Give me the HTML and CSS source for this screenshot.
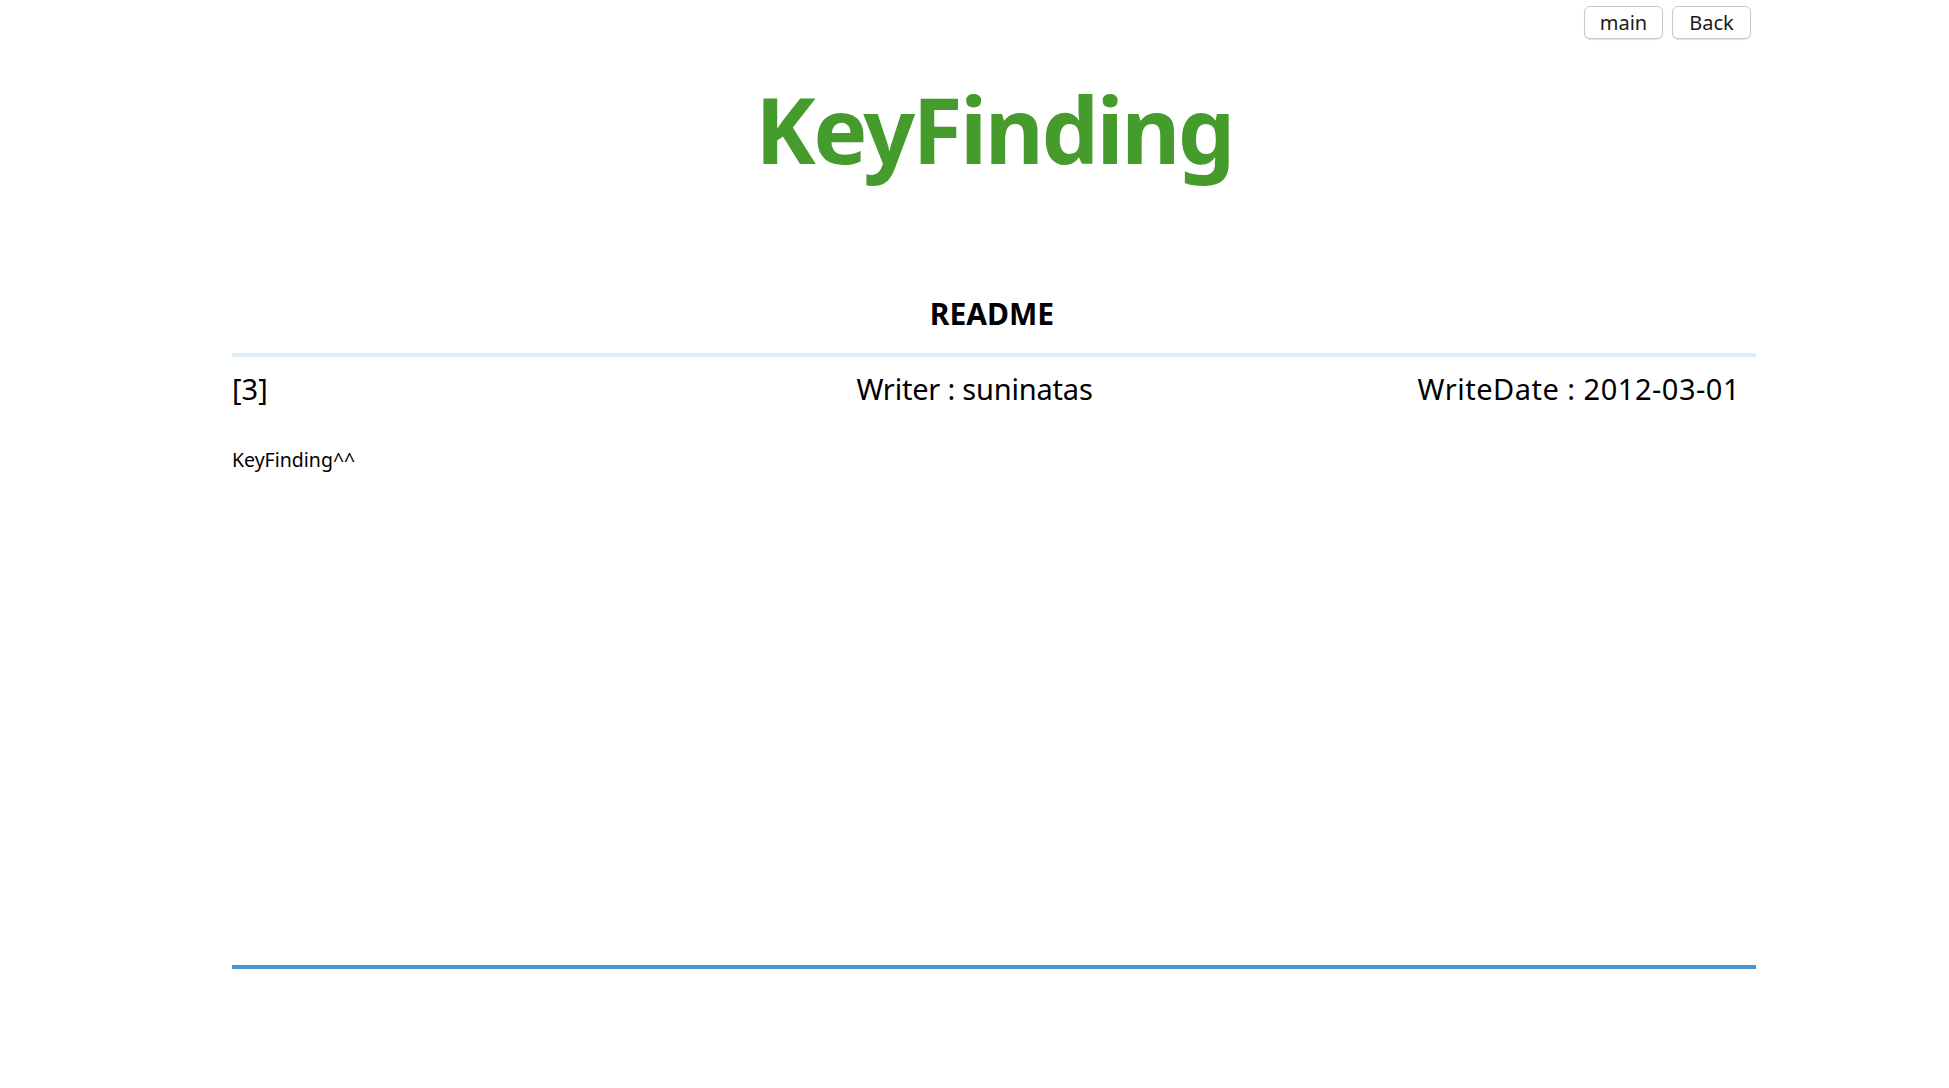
FILE: index.html
```html
<!DOCTYPE html>
<html lang="ko">
<head>
<meta charset="utf-8">
<title>KeyFinding</title>
<link rel="stylesheet" href="styles.css">
</head>
<body>
<div class="page">
  <div class="topbar">
    <button class="btn">main</button>
    <button class="btn">Back</button>
  </div>
  <h1 class="title">KeyFinding</h1>
  <h2 class="subject">README</h2>
  <div class="board">
    <div class="meta">
      <div class="cell num">[3]</div>
      <div class="cell writer">Writer : suninatas</div>
      <div class="cell date">WriteDate : 2012-03-01</div>
    </div>
    <div class="content">KeyFinding^^</div>
  </div>
</div>
</body>
</html>
```

FILE: styles.css
```css
html, body {
  margin: 0;
  padding: 0;
  background: #ffffff;
}
body {
  padding-left: 39px;
  font-family: "Noto Sans", "Noto Sans CJK KR", sans-serif;
  color: #000;
}
.page {
  width: 1524px;
  margin: 0 auto;
}
.topbar {
  display: flex;
  justify-content: flex-end;
  gap: 9px;
  padding-top: 6px;
  padding-right: 5px;
}
.btn {
  height: 33px;
  padding: 0 11px;
  min-width: 79px;
  border: 1px solid #c9c9c9;
  border-radius: 6px;
  background: #fff;
  box-shadow: 0 1px 1px rgba(0,0,0,0.12);
  font-family: "Noto Sans", sans-serif;
  font-size: 20px;
  color: #1a1a1a;
  line-height: 31px;
}
.title {
  margin: 40px 0 0;
  text-align: center;
  font-size: 91px;
  line-height: 100px;
  font-weight: 700;
  letter-spacing: -2.5px;
  color: #469b2d;
}
.subject {
  margin: 115px 0 0;
  padding-right: 4px;
  text-align: center;
  font-size: 30px;
  line-height: 40px;
  font-weight: 700;
}
.board {
  margin-top: 19px;
  border-top: 4px solid #dbeefa;
  border-bottom: 4px solid #4b93cb;
  height: 608px;
}
.meta {
  display: grid;
  grid-template-columns: 500px 485px 1fr;
  padding-top: 12px;
  font-size: 29px;
  line-height: 40px;
}
.cell.writer {
  text-align: center;
  letter-spacing: -0.2px;
}
.cell.date {
  text-align: right;
  padding-right: 16px;
  letter-spacing: 0.5px;
}
.content {
  margin-top: 37px;
  font-size: 19.5px;
  line-height: 28px;
}
```
